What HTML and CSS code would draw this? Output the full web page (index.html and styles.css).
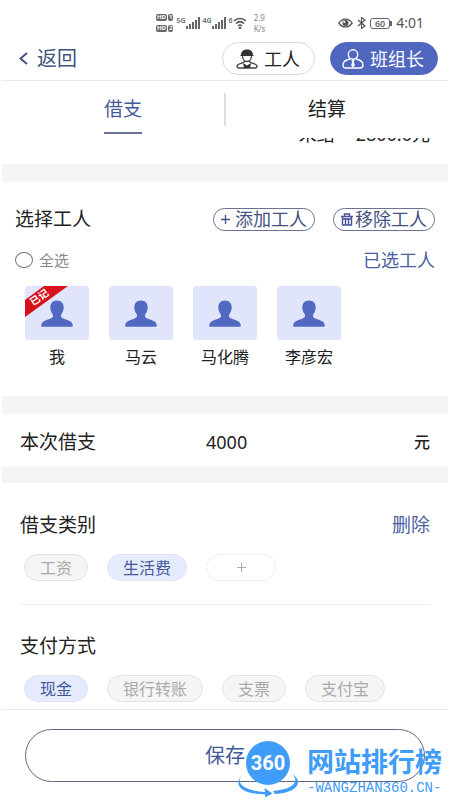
FILE: index.html
```html
<!DOCTYPE html>
<html lang="zh-CN">
<head>
<meta charset="utf-8">
<meta name="viewport" content="width=device-width, initial-scale=1">
<title>借支</title>
<link rel="stylesheet" href="styles.css">
</head>
<body>
<svg class="defs" aria-hidden="true">
  <symbol id="person" viewBox="0 0 32 27">
    <path d="M16 0.500c4.200 0 6.800 2.800 6.700 7-.1 3-1.200 5.500-2.700 7.200-.5 2.300.8 3.400 3.500 4.300 4.400 1.400 8 2.600 8.300 6.200.1 1-.5 1.500-1.500 1.500H1.700c-1 0-1.600-.5-1.500-1.500.3-3.600 3.900-4.800 8.300-6.200 2.700-.9 4-2 3.500-4.300-1.500-1.700-2.600-4.200-2.700-7.200C9.200 3.300 11.800.5 16 .5z" fill="#5169c0"/>
  </symbol>
  <symbol id="signal" viewBox="0 0 14 12">
    <path d="M1 9v3M4 7v5M7 5v7M10 3v9M13 0v12" stroke="#666" stroke-width="2" fill="none"/>
  </symbol>
</svg>
<div class="app">
  <div class="status">
    <div class="status-left">
      <div class="sims">
        <span class="sim"><b class="tag">HD</b><b class="tag">1</b></span>
        <span class="sim"><b class="tag">HD</b><b class="tag">2</b></span>
      </div>
      <div class="net"><span class="gen">5G</span><svg width="14" height="12"><use href="#signal"/></svg></div>
      <div class="net"><span class="gen">4G</span><svg width="14" height="12"><use href="#signal"/></svg></div>
      <div class="net"><span class="gen">6</span>
        <svg width="14" height="12" viewBox="0 0 14 12" fill="none" stroke="#555" stroke-width="1.500"><path d="M1 4c3.500-3.500 8.500-3.500 12 0M3 6.500c2.500-2.300 5.500-2.300 8 0M5 9c1.300-1.200 2.700-1.200 4 0"/><circle cx="7" cy="11" r=".6"/></svg>
      </div>
      <div class="speed"><span>2.9</span><span>K/s</span></div>
    </div>
    <div class="status-right">
      <svg width="15" height="10" viewBox="0 0 15 10"><path d="M.8 5C4.500-.3 10.500-.3 14.200 5 10.500 10.200 4.500 10.200.8 5z" fill="none" stroke="#555" stroke-width="1.300"/><circle cx="7.500" cy="5" r="3" fill="#555"/><circle cx="6.300" cy="4" r="1" fill="#fff"/></svg>
      <svg width="9" height="12" viewBox="0 0 9 12"><path d="M1 3l7 6-3.500 2.500v-11L8 3 1 9" fill="none" stroke="#555" stroke-width="1.200"/></svg>
      <span class="power"><span class="battery">60</span><span class="battery-tip"></span></span>
      <span class="clock">4:01</span>
    </div>
  </div>

  <header class="nav">
    <a class="back" href="#">
      <svg width="9" height="13" viewBox="0 0 9 13"><path d="M8 1L1.500 6.500 8 12" fill="none" stroke="#43527f" stroke-width="2"/></svg>返回</a>
    <div class="roles">
      <button class="role" type="button">
        <svg width="22" height="20" viewBox="0 0 22 20"><path d="M5 6C5 2.500 7.500.5 11 .5s6 2 6 5.500l1 1H4z" fill="#333"/><path d="M6.500 7c0 3 1.800 5.500 4.500 5.500S15.500 10 15.500 7M8.500 12c0 1.500-1 1.700-3.500 2.300C2.500 15 1 15.500 1 17.300c0 1.200.7 1.700 2 1.700h16c1.300 0 2-.5 2-1.700 0-1.800-1.500-2.300-4-3-2.500-.6-3.500-.8-3.500-2.300" fill="none" stroke="#444" stroke-width="1.300"/><path d="M7 14l4 2.500 4-2.500-1 5H8z" fill="#333"/></svg>工人</button>
      <button class="role role-on" type="button" aria-pressed="true">
        <svg width="22" height="20" viewBox="0 0 22 20"><g fill="none" stroke="#fff" stroke-width="1.400"><circle cx="11" cy="5.500" r="4.700"/><path d="M8.500 9.800C3.500 11 1 12.500 1 15.700 1 18 2 19 4 19h14c2 0 3-1 3-3.300 0-3.200-2.500-4.700-7.500-5.900"/></g><path d="M9.500 11h3l-.6 2 1 3.500L11 18.500l-1.900-2 1-3.500z" fill="#fff"/></svg>班组长</button>
    </div>
  </header>

  <nav class="tabs">
    <a class="tab" href="#" aria-current="page"><span class="tab-text tab-on">借支</span></a>
    <a class="tab" href="#"><span class="tab-text">结算</span></a>
  </nav>

  <main class="content">
    <section class="summary"><p class="summary-line"><span>未结</span><span>2800.0元</span></p></section>

    <section class="workers">
      <div class="row">
        <h2 class="title">选择工人</h2>
        <div class="actions">
          <button class="action" type="button"><svg width="9" height="9" viewBox="0 0 9 9"><path d="M4.500 0v9M0 4.500h9" stroke="#43527f" stroke-width="1.300"/></svg>添加工人</button>
          <button class="action action-tight" type="button"><svg width="12" height="13" viewBox="0 0 12 13"><path d="M0 3.500h12M3.500 3V1h5v2M1.500 4v8h9V4M4.500 5v6.500M7.500 5v6.500M2 6h8" fill="none" stroke="#43529a" stroke-width="1.400"/></svg>移除工人</button>
        </div>
      </div>
      <div class="row row-select">
        <label class="all"><input class="check" type="checkbox">全选</label>
        <a class="link link-small" href="#">已选工人</a>
      </div>
      <ul class="people">
        <li class="worker"><span class="avatar"><svg width="32" height="27"><use href="#person"/></svg>
          <span class="ribbon"><svg width="43" height="31" viewBox="0 0 43 31"><path d="M19 0h24L0 31V14z" fill="#d8121c"/></svg><b class="ribbon-text">已记</b></span></span>我</li>
        <li class="worker"><span class="avatar"><svg width="32" height="27"><use href="#person"/></svg></span>马云</li>
        <li class="worker"><span class="avatar"><svg width="32" height="27"><use href="#person"/></svg></span>马化腾</li>
        <li class="worker"><span class="avatar"><svg width="32" height="27"><use href="#person"/></svg></span>李彦宏</li>
      </ul>
    </section>

    <section class="amount">
      <label class="title" for="amount">本次借支</label>
      <input class="amount-input" id="amount" type="text" inputmode="decimal" value="4000">
      <span class="unit">元</span>
    </section>

    <section class="group">
      <div class="row">
        <h2 class="title">借支类别</h2>
        <a class="link" href="#">删除</a>
      </div>
      <div class="chips">
        <button class="chip" type="button">工资</button>
        <button class="chip chip-on" type="button" aria-pressed="true">生活费</button>
        <button class="chip chip-add" type="button" aria-label="添加类别"><svg width="9" height="9" viewBox="0 0 9 9"><path d="M4.500 0v9M0 4.500h9" stroke="#aaa"/></svg></button>
      </div>
    </section>

    <section class="group group-pay">
      <div class="row"><h2 class="title">支付方式</h2></div>
      <div class="chips">
        <button class="chip chip-on" type="button" aria-pressed="true">现金</button>
        <button class="chip" type="button">银行转账</button>
        <button class="chip" type="button">支票</button>
        <button class="chip" type="button">支付宝</button>
      </div>
    </section>
  </main>

  <footer class="footer">
    <button class="save" type="button">保存</button>
    <div class="brand">
      <div class="brand-logo">
        <svg width="60" height="58" viewBox="0 0 60 58"><circle cx="30" cy="23" r="22" fill="#3f9cf8"/><path d="M5 34C-2 41 1 50 27 52l-.5-4 8 5.500-7.500 4 .3-3C1 54-5 44 5 34z" fill="#3f9cf8"/><path d="M54 34c7 6 4 15-19 17l2 3c23-1 29-13 17-20z" fill="#3f9cf8"/></svg>
        <b class="brand-number">360</b>
      </div>
      <div class="brand-words"><b class="brand-name">网站排行榜</b><span class="brand-url">-WANGZHAN360.CN-</span></div>
    </div>
  </footer>
</div>
</body>
</html>
```
FILE: styles.css
```css
* {
  box-sizing: border-box;
}

body,
h2,
p,
ul {
  margin: 0;
  padding: 0;
}

body {
  background: #fff;
  color: #222;
  font: 16px/24px "Noto Sans", "Noto Sans CJK SC", sans-serif;
}

button,
input {
  font: inherit;
  color: inherit;
  padding: 0;
  margin: 0;
}

button {
  background: none;
  cursor: pointer;
}

a {
  color: inherit;
  text-decoration: none;
}

svg {
  display: block;
  flex: none;
}

.defs {
  position: absolute;
  width: 0;
  height: 0;
}

.app {
  display: flex;
  flex-direction: column;
  min-height: 100vh;
  padding: 0 2px;
}

.status {
  display: flex;
  justify-content: space-between;
  align-items: center;
  padding: 10px 24px 6px 154px;
  height: 42px;
  color: #666;
}

.status-left,
.status-right,
.net,
.power,
.sim {
  display: flex;
  align-items: center;
}

.status-left {
  gap: 3px;
}

.status-right {
  gap: 4px;
}

.sims {
  display: grid;
  gap: 4px;
}

.sim {
  gap: 1px;
}

.tag {
  background: #666;
  border-radius: 2px;
  color: #fff;
  font-size: 6px;
  line-height: 7px;
  padding: 0 1px;
}

.net {
  align-items: flex-start;
}

.gen {
  font-size: 7px;
  font-weight: 600;
  line-height: 7px;
}

.speed {
  display: grid;
  font-size: 8px;
  line-height: 11px;
  color: #888;
  padding-left: 4px;
}

.battery {
  border: 1px solid #666;
  border-radius: 3px;
  font-size: 9px;
  font-weight: 600;
  line-height: 9px;
  padding: 0 4px;
}

.battery-tip {
  width: 2px;
  height: 5px;
  background: #666;
}

.clock {
  font-size: 14px;
  line-height: 16px;
  color: #555;
}

.nav {
  display: flex;
  justify-content: space-between;
  align-items: center;
  padding: 0 10px 5px 17px;
  border-bottom: 1px solid #e9e9e9;
}

.back {
  display: flex;
  align-items: center;
  gap: 9px;
  font-size: 20px;
  color: #43527f;
}

.roles {
  display: flex;
  gap: 15px;
}

.role {
  display: flex;
  align-items: center;
  gap: 6px;
  height: 33px;
  padding: 0 14px 0 13px;
  border: 1px solid #d9d9d9;
  border-radius: 17px;
  font-size: 18px;
}

.role-on {
  padding: 0 13px 0 11px;
  background: #5067bf;
  border-color: #5067bf;
  color: #fff;
}

.tabs {
  display: flex;
  padding: 12px 20px 4px;
}

.tab {
  flex: 1;
  display: flex;
  justify-content: center;
  height: 41px;
  font-size: 19px;
  line-height: 32px;
}

.tab + .tab {
  border-left: 2px solid #ddd;
  height: 33px;
}

.tab-on {
  color: #43599a;
  border-bottom: 2px solid #6a7396;
}

.content {
  flex: 1;
}

.summary {
  overflow: hidden;
  padding: 0 18px 18px;
  border-bottom: 18px solid #f4f4f4;
}

.summary-line {
  display: flex;
  justify-content: flex-end;
  gap: 21px;
  margin-top: -16px;
  font-size: 18px;
}

.workers {
  padding: 22px 13px 27px;
  border-bottom: 18px solid #f4f4f4;
}

.row {
  display: flex;
  justify-content: space-between;
  align-items: center;
}

.title {
  font-size: 19px;
  font-weight: 400;
  line-height: 30px;
}

.actions {
  display: flex;
  gap: 18px;
}

.action {
  display: flex;
  align-items: center;
  gap: 5px;
  height: 23px;
  padding: 0 7px;
  border: 1px solid #6b7291;
  border-radius: 12px;
  color: #43527f;
  font-size: 18px;
  line-height: 20px;
}

.action-tight {
  gap: 2px;
}

.row-select {
  padding-top: 14px;
}

.all {
  display: flex;
  align-items: center;
  gap: 6px;
  color: #888;
  font-size: 15px;
}

.check {
  appearance: none;
  width: 18px;
  height: 16px;
  border: 1px solid #777;
  border-radius: 50%;
}

.check:checked {
  background: #5067bf;
}

.link {
  color: #4a609f;
  font-size: 19px;
}

.link-small {
  font-size: 18px;
}

.people {
  display: flex;
  flex-wrap: wrap;
  gap: 20px;
  padding: 14px 10px 0;
  list-style: none;
}

.worker {
  display: grid;
  gap: 5px;
  justify-items: center;
}

.avatar {
  position: relative;
  display: grid;
  place-items: center;
  width: 64px;
  height: 54px;
  border-radius: 3px;
  background: #e0e5fc;
}

.ribbon {
  position: absolute;
  top: 0;
  left: 0;
}

.ribbon-text {
  position: absolute;
  top: 5px;
  left: 4px;
  color: #fff;
  font-size: 10px;
  line-height: 12px;
  white-space: nowrap;
  transform: rotate(-35deg);
}

.amount {
  display: grid;
  grid-template-columns: 186px 1fr auto;
  align-items: center;
  padding: 13px 18px 10px;
  border-bottom: 16px solid #f4f4f4;
}

.amount-input {
  min-width: 0;
  height: 30px;
  border: 0;
  background: none;
  font-size: 18px;
}

.unit {
  font-weight: 500;
}

.group {
  margin: 0 18px;
  padding: 27px 0 23px;
}

.group-pay {
  border-top: 1px solid #eee;
  padding: 26px 0 6px;
}

.chips {
  display: flex;
  flex-wrap: wrap;
  gap: 19px;
  padding: 14px 4px 0;
}

.chip {
  height: 27px;
  padding: 0 15px;
  border: 1px solid #e2e2e2;
  border-radius: 14px;
  background: #f5f5f5;
  color: #aaa;
  line-height: 24px;
}

.chip-on {
  background: #e6eafd;
  border-color: #dde2f6;
  color: #43599a;
}

.chip-add {
  display: grid;
  place-items: center;
  width: 70px;
  background: #fff;
  border-color: #eee;
}

.footer {
  position: relative;
  padding: 19px 23px 18px;
  border-top: 1px solid #eaeaea;
}

.save {
  display: block;
  width: 100%;
  height: 53px;
  border: 1px solid #5f6580;
  border-radius: 27px;
  color: #43599a;
  font-size: 20px;
}

.brand {
  position: absolute;
  right: 6px;
  bottom: 2px;
  display: flex;
  gap: 9px;
  color: #3f9cf8;
}

.brand-logo {
  position: relative;
}

.brand-number {
  position: absolute;
  top: 11px;
  left: 0;
  width: 100%;
  color: #fff;
  font-family: "Liberation Sans Narrow", "Roboto", sans-serif;
  font-size: 20px;
  text-align: center;
}

.brand-words {
  display: grid;
  align-content: end;
}

.brand-name {
  font-size: 27px;
  line-height: 32px;
}

.brand-url {
  font-family: "Liberation Mono", monospace;
  font-size: 14px;
  line-height: 20px;
}
```
